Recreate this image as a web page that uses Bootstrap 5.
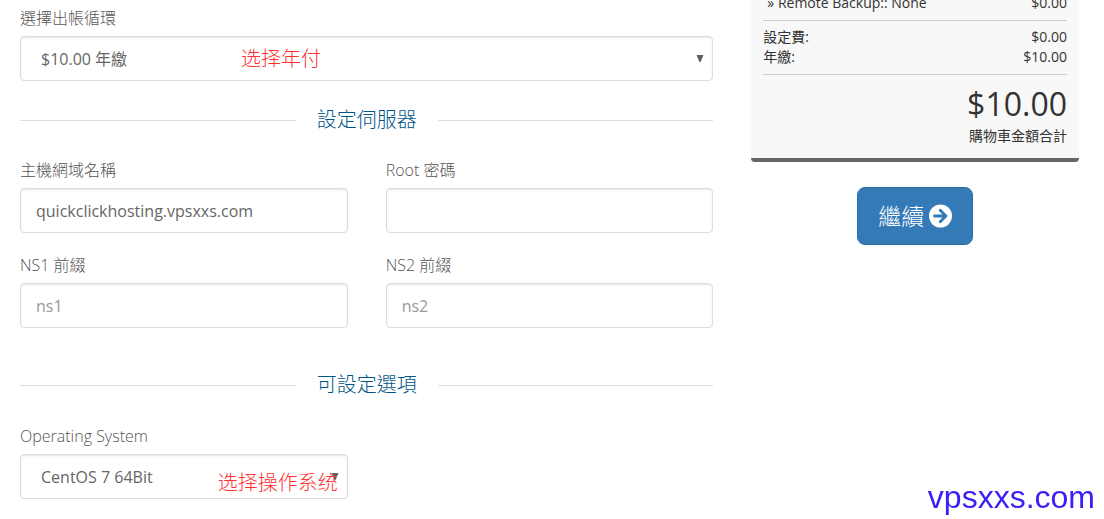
<!DOCTYPE html>
<html lang="zh-Hant">
<head>
<meta charset="utf-8">
<meta name="viewport" content="width=device-width, initial-scale=1">
<title>Configure Server</title>
<link href="https://cdn.jsdelivr.net/npm/bootstrap@5.3.0/dist/css/bootstrap.min.css" rel="stylesheet">
<style>
  body { font-family: "Open Sans", "Noto Sans CJK TC", sans-serif; color: #333; background: #fff; overflow-x: hidden; }
  .order-page { padding: 8px 25px 0 20px; }
  .order-page .row { --bs-gutter-x: 38px; }
  .field { margin-bottom: 22px; }
  .field label { display: block; margin-bottom: 8px; font-size: 16px; line-height: 20px; font-weight: 300; color: #555; }
  .field .form-control, .field .form-select {
    height: 45px; padding: 6px 15px; font-size: 16px; line-height: 24px; color: #666;
    border: 1px solid #ddd; border-radius: 4px; box-shadow: inset 0 1px 2px rgba(0, 0, 0, .1);
  }
  .field .form-control::placeholder { color: #999; }
  .field .form-select {
    padding-left: 20px; padding-right: 32px;
    background: #fff url("data:image/svg+xml,%3Csvg xmlns='http://www.w3.org/2000/svg' viewBox='0 0 8 8'%3E%3Cpath d='M.5 0h7L4.6 7H3.4z' fill='%23606060'/%3E%3C/svg%3E") no-repeat right 8px center / 8px 8px;
  }
  .field-note { color: #ff3030; font: 300 20px/24px "Noto Sans CJK SC", sans-serif; pointer-events: none; white-space: nowrap; }
  .note-cycle { left: 221px; top: 10px; }
  .note-os { right: 10px; top: 16px; }
  .section-title { display: flex; align-items: center; margin: 0 0 23px; font-size: 20px; line-height: 34px; font-weight: 300; color: #058; }
  .section-title::before, .section-title::after { content: ""; flex: 1; border-top: 1px solid #ddd; }
  .section-title span { padding: 0 21px; }
  .section-title.options { margin-top: 18px; margin-bottom: 24px; }
  .summary { margin-top: -15px; padding: 0 12px 12px; background: #f8f8f8; border-bottom: 4px solid #666; border-radius: 4px; font-size: 14px; line-height: 20px; }
  .summary hr { margin: 7px 0 6px; border-top: 1px solid #ccc; opacity: 1; }
  .summary .addon { padding-left: 4px; }
  .summary .total { padding-top: 5px; font-size: 32px; line-height: 36px; margin-bottom: 4px; }
  .btn-continue {
    --bs-btn-bg: #337ab7; --bs-btn-border-color: #2e6da4; --bs-btn-color: #fff;
    --bs-btn-hover-bg: #286090; --bs-btn-hover-color: #fff;
    height: 58px; padding: 0 20px; margin-top: 25px; font-size: 23px; line-height: 30px; font-weight: 300; border-radius: 8px;
  }
  .site-mark { right: 9px; bottom: 4px; font: 32px/36px "Liberation Sans", sans-serif; color: #3a20f5; }
</style>
</head>
<body>
<main class="order-page">
  <form class="row" onsubmit="return false">
    <div class="col-8">
      <div class="field">
        <label for="cycle">選擇出帳循環</label>
        <div class="position-relative">
          <select class="form-select" id="cycle"><option>$10.00 年繳</option></select>
          <span class="field-note note-cycle position-absolute" lang="zh-Hans">选择年付</span>
        </div>
      </div>

      <h2 class="section-title"><span>設定伺服器</span></h2>
      <div class="row">
        <div class="col-6 field">
          <label for="host">主機網域名稱</label>
          <input class="form-control" id="host" type="text" value="quickclickhosting.vpsxxs.com">
        </div>
        <div class="col-6 field">
          <label for="rootpw">Root 密碼</label>
          <input class="form-control" id="rootpw" type="password">
        </div>
        <div class="col-6 field">
          <label for="ns1">NS1 前綴</label>
          <input class="form-control" id="ns1" type="text" placeholder="ns1">
        </div>
        <div class="col-6 field">
          <label for="ns2">NS2 前綴</label>
          <input class="form-control" id="ns2" type="text" placeholder="ns2">
        </div>
      </div>

      <h2 class="section-title options"><span>可設定選項</span></h2>
      <div class="row">
        <div class="col-6 field mb-0">
          <label for="os">Operating System</label>
          <div class="position-relative">
            <select class="form-select" id="os"><option>CentOS 7 64Bit</option></select>
            <span class="field-note note-os position-absolute" lang="zh-Hans">选择操作系统</span>
          </div>
        </div>
      </div>
    </div>

    <aside class="col-4">
      <div class="summary">
        <div class="addon d-flex justify-content-between"><span>» Remote Backup:: None</span><span>$0.00</span></div>
        <hr>
        <div class="d-flex justify-content-between"><span>設定費:</span><span>$0.00</span></div>
        <div class="d-flex justify-content-between"><span>年繳:</span><span>$10.00</span></div>
        <hr>
        <div class="total text-end">$10.00</div>
        <div class="text-end">購物車金額合計</div>
      </div>
      <div class="text-center">
        <button type="submit" class="btn btn-continue d-inline-flex align-items-center gap-1">
          繼續
          <svg width="24" height="24" viewBox="0 0 24 24" aria-hidden="true">
            <circle cx="12.5" cy="12" r="11.5" fill="#fff"/>
            <path d="M6.5 12h11M12.2 6.2l5.8 5.8-5.8 5.8" fill="none" stroke="#337ab7" stroke-width="2.8" stroke-linecap="round" stroke-linejoin="round"/>
          </svg>
        </button>
      </div>
    </aside>
  </form>
</main>
<div class="site-mark position-fixed">vpsxxs.com</div>
<script src="https://cdn.jsdelivr.net/npm/bootstrap@5.3.0/dist/js/bootstrap.bundle.min.js"></script>
</body>
</html>
